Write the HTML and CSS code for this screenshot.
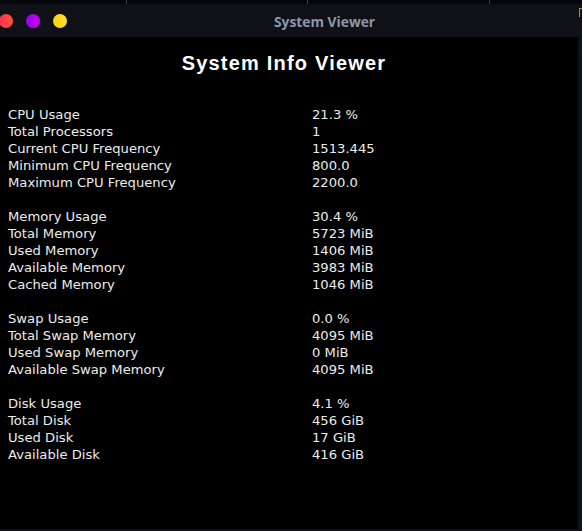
FILE: index.html
```html
<!DOCTYPE html>
<html>
<head>
<meta charset="utf-8">
<link rel="stylesheet" href="styles.css">
</head>
<body>
<div class="window">
  <div class="topstrip">
    <div class="seg s1"></div>
    <div class="seg s2"></div>
    <div class="seg s3"></div>
    <div class="seg s4"></div>
  </div>
  <div class="titlebar">
    <div class="dots">
      <span class="dot red"></span>
      <span class="dot purple"></span>
      <span class="dot yellow"></span>
    </div>
    <div class="wintitle">System Viewer</div>
    <span class="edgeicon"></span>
  </div>
  <div class="body">
    <div class="content">
      <h1 class="heading">System Info Viewer</h1>
      <div class="table">
        <div class="group">
          <div class="row"><span>CPU Usage</span><span>21.3 %</span></div>
          <div class="row"><span>Total Processors</span><span>1</span></div>
          <div class="row"><span>Current CPU Frequency</span><span>1513.445</span></div>
          <div class="row"><span>Minimum CPU Frequency</span><span>800.0</span></div>
          <div class="row"><span>Maximum CPU Frequency</span><span>2200.0</span></div>
        </div>
        <div class="group">
          <div class="row"><span>Memory Usage</span><span>30.4 %</span></div>
          <div class="row"><span>Total Memory</span><span>5723 MiB</span></div>
          <div class="row"><span>Used Memory</span><span>1406 MiB</span></div>
          <div class="row"><span>Available Memory</span><span>3983 MiB</span></div>
          <div class="row"><span>Cached Memory</span><span>1046 MiB</span></div>
        </div>
        <div class="group">
          <div class="row"><span>Swap Usage</span><span>0.0 %</span></div>
          <div class="row"><span>Total Swap Memory</span><span>4095 MiB</span></div>
          <div class="row"><span>Used Swap Memory</span><span>0 MiB</span></div>
          <div class="row"><span>Available Swap Memory</span><span>4095 MiB</span></div>
        </div>
        <div class="group">
          <div class="row"><span>Disk Usage</span><span>4.1 %</span></div>
          <div class="row"><span>Total Disk</span><span>456 GiB</span></div>
          <div class="row"><span>Used Disk</span><span>17 GiB</span></div>
          <div class="row"><span>Available Disk</span><span>416 GiB</span></div>
        </div>
      </div>
    </div>
    <div class="rightedge"></div>
  </div>
  <div class="bottomedge"></div>
</div>
</body>
</html>
```

FILE: styles.css
```css
html, body {
  margin: 0;
  padding: 0;
  background: #0f1117;
}
.window {
  width: 582px;
  height: 531px;
  display: flex;
  flex-direction: column;
  overflow: hidden;
}
.topstrip {
  height: 4px;
  display: flex;
  background: #05060b;
}
.seg { height: 100%; }
.s1 { width: 126px; border-right: 1px solid #3b3e46; }
.s2 { width: 180px; border-right: 1px solid #3b3e46; }
.s3 { width: 181px; border-right: 1px solid #3b3e46; }
.s4 { flex: 1; }
.titlebar {
  height: 33px;
  background: #0f1117;
  display: flex;
  align-items: center;
  position: relative;
}
.dots {
  display: flex;
  gap: 13px;
  margin-left: -1px;
}
.dot {
  width: 14px;
  height: 14px;
  border-radius: 50%;
  display: block;
}
.red { background: linear-gradient(90deg, #ff3050, #ff5535); }
.purple { background: linear-gradient(90deg, #9d00f5, #c800e6); }
.yellow { background: linear-gradient(90deg, #ffd000, #ffe135); }
.wintitle {
  margin-left: 207px;
  padding-top: 2px;
  font-family: "Open Sans", "DejaVu Sans", sans-serif;
  font-weight: 700;
  font-size: 13.8px;
  color: #8d97ab;
}
.edgeicon {
  position: absolute;
  right: 0;
  top: 4px;
  width: 2px;
  height: 8px;
  border-left: 1px solid #b98a4a;
  border-top: 1px solid #b98a4a;
}
.body {
  flex: 1;
  display: flex;
}
.content {
  width: 578px;
  background: #000;
  color: #ececec;
  font-family: "DejaVu Sans", sans-serif;
  font-size: 13.15px;
  line-height: 17px;
}
.rightedge {
  flex: 1;
  background: #0f1117;
}
.bottomedge {
  height: 2px;
  background: #0f1117;
}
.heading {
  margin: 11px 0 0 0;
  text-align: center;
  padding-right: 10px;
  font-family: "Liberation Sans", "DejaVu Sans", sans-serif;
  font-weight: 700;
  font-size: 20px;
  line-height: 30px;
  letter-spacing: 1.2px;
  color: #fff;
}
.table {
  margin-top: 28px;
  padding-left: 8px;
  display: flex;
  flex-direction: column;
  gap: 17px;
}
.row {
  display: grid;
  grid-template-columns: 304px auto;
}
```
